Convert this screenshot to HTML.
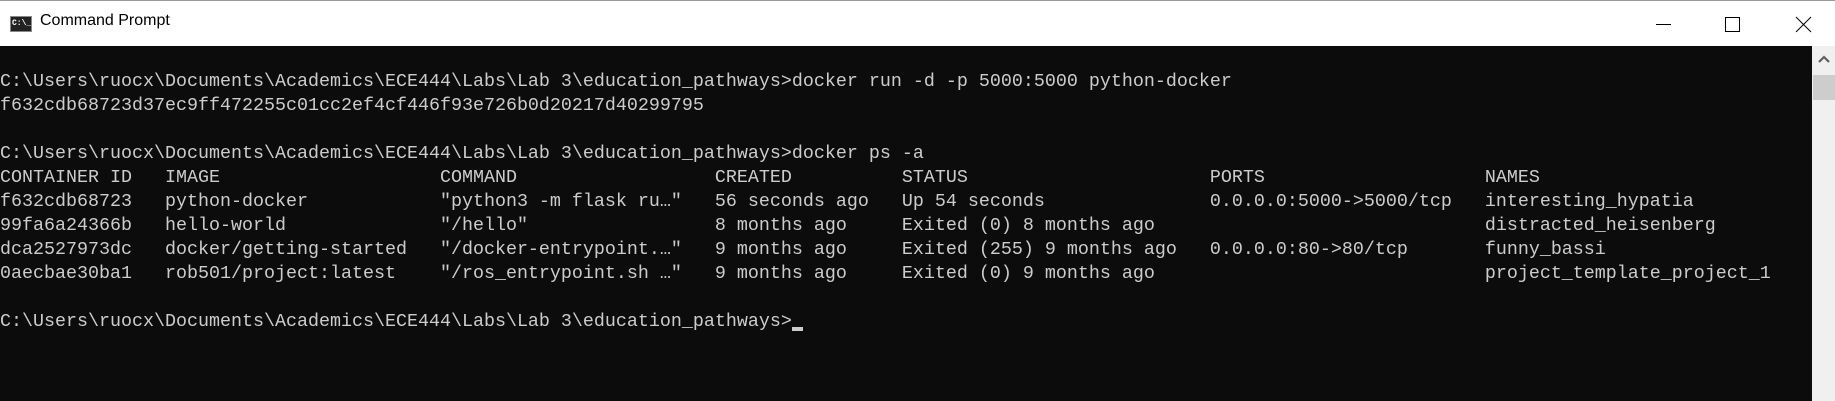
<!DOCTYPE html>
<html><head><style>
html,body{margin:0;padding:0;width:1835px;height:401px;overflow:hidden;background:#fff}
.tb{position:absolute;left:0;top:0;width:1835px;height:46px;background:#fff;border-top:1px solid #9a9a9a;box-sizing:border-box}
.title{position:absolute;left:40px;top:11px;font:16px "Liberation Sans",sans-serif;color:#000}
.ico{position:absolute;left:10px;top:15px;width:22px;height:16px;background:#222;border:1px solid #888;box-sizing:border-box;color:#fff;font:bold 8px "Liberation Mono",monospace;line-height:14px;text-indent:1px}
.term{position:absolute;left:0;top:46px;width:1812px;height:355px;background:#0c0c0c}
pre{margin:0;position:absolute;left:0;top:24px;font-family:"Liberation Mono",monospace;font-size:18.33px;line-height:24px;color:#cccccc}
.sb{position:absolute;left:1812px;top:46px;width:23px;height:355px;background:#f0f0f0}
.thumb{position:absolute;left:1px;top:29px;width:22px;height:25px;background:#cdcdcd}
.cur{display:inline-block;width:11px;height:4px;background:#ccc;vertical-align:-5px}
</style></head><body>
<div class="tb">
<div class="ico">C:\_</div>
<div class="title">Command Prompt</div>
<svg style="position:absolute;left:1650px;top:13px" width="200" height="20">
<line x1="6" y1="10.5" x2="21" y2="10.5" stroke="#000" stroke-width="1"/>
<rect x="75.5" y="3.5" width="14" height="14" fill="none" stroke="#000" stroke-width="1"/>
<line x1="146" y1="3" x2="161" y2="18" stroke="#000" stroke-width="1"/>
<line x1="161" y1="3" x2="146" y2="18" stroke="#000" stroke-width="1"/>
</svg>
</div>
<div class="term"><pre>C:\Users\ruocx\Documents\Academics\ECE444\Labs\Lab 3\education_pathways>docker run -d -p 5000:5000 python-docker
f632cdb68723d37ec9ff472255c01cc2ef4cf446f93e726b0d20217d40299795

C:\Users\ruocx\Documents\Academics\ECE444\Labs\Lab 3\education_pathways>docker ps -a
CONTAINER ID   IMAGE                    COMMAND                  CREATED          STATUS                      PORTS                    NAMES
f632cdb68723   python-docker            "python3 -m flask ru…"   56 seconds ago   Up 54 seconds               0.0.0.0:5000->5000/tcp   interesting_hypatia
99fa6a24366b   hello-world              "/hello"                 8 months ago     Exited (0) 8 months ago                              distracted_heisenberg
dca2527973dc   docker/getting-started   "/docker-entrypoint.…"   9 months ago     Exited (255) 9 months ago   0.0.0.0:80->80/tcp       funny_bassi
0aecbae30ba1   rob501/project:latest    "/ros_entrypoint.sh …"   9 months ago     Exited (0) 9 months ago                              project_template_project_1

C:\Users\ruocx\Documents\Academics\ECE444\Labs\Lab 3\education_pathways><span class="cur"></span></pre></div>
<div class="sb"><svg style="position:absolute;left:6px;top:9px" width="12" height="8"><path d="M1 7 L6 2 L11 7" fill="none" stroke="#606060" stroke-width="2.2"/></svg><div class="thumb"></div></div>
</body></html>
